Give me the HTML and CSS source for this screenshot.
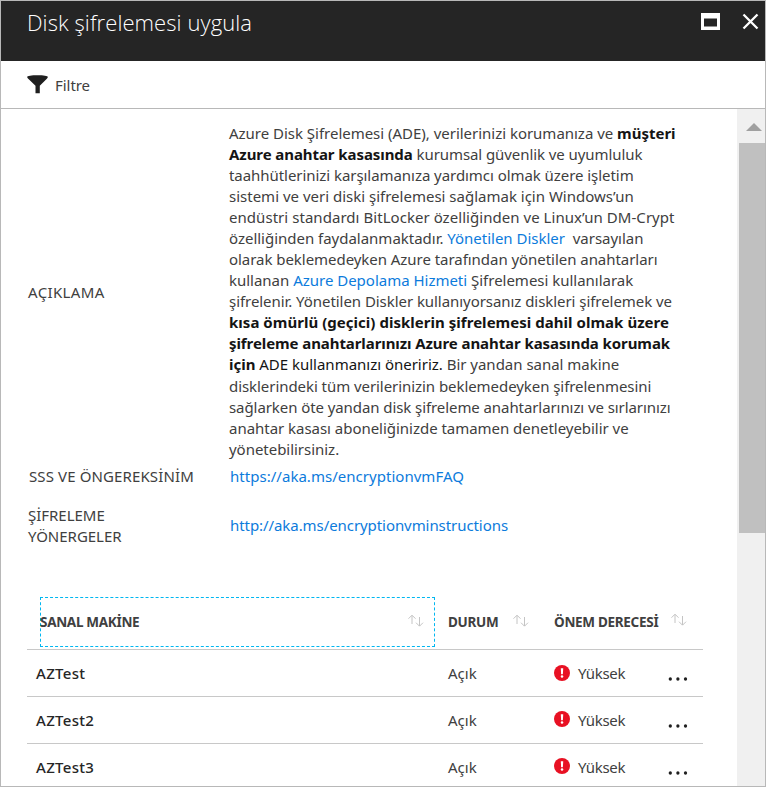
FILE: index.html
```html
<!DOCTYPE html>
<html lang="tr">
<head>
<meta charset="utf-8">
<title>Disk şifrelemesi uygula</title>
<link rel="stylesheet" href="styles.css">
</head>
<body>
<svg width="0" height="0" class="defs">
  <symbol id="sort" viewBox="0 0 16 13"><path d="M4 10V1.500M.5 4.700L4 1.200l3.500 3.500M11.500 3v9M8 8.700l3.500 3.500L15 8.700" fill="none" stroke="#c4c4c4" stroke-width="1"/></symbol>
  <symbol id="alert" viewBox="0 0 16 16"><circle cx="8" cy="8" r="8" fill="#e81123"/><path d="M6.800 3.200h2.400L8.900 9.200H7.100z" fill="#fff"/><circle cx="8" cy="11.600" r="1.250" fill="#fff"/></symbol>
  <symbol id="more" viewBox="0 0 20 4"><g fill="#1f1f1f"><circle cx="2.300" cy="2" r="1.650"/><circle cx="9.900" cy="2" r="1.650"/><circle cx="17.500" cy="2" r="1.650"/></g></symbol>
</svg>
<div class="blade">
  <header class="titlebar">
    <h1 class="title">Disk şifrelemesi uygula</h1>
    <svg class="maximize" width="19" height="17" viewBox="0 0 19 17"><path fill="#fff" fill-rule="evenodd" d="M0 0h19v17H0zM3 5.500v8h13v-8z"/></svg>
    <svg class="close" width="17" height="17" viewBox="0 0 17 17"><path d="M1.500 1.500l14 14M15.500 1.500l-14 14" stroke="#fff" stroke-width="2.300" fill="none"/></svg>
  </header>
  <div class="toolbar">
    <svg class="funnel" width="21" height="19" viewBox="0 0 21 19"><path fill="#1f1f1f" d="M.2 2C.2.900 4.500.3 10.500.3S20.800.900 20.800 2c0 .7-.6 1.200-1.200 1.900L12.800 10.800V18.200H8.500V10.800L1.500 3.900C.8 3.200.2 2.700.2 2z"/></svg>
    <span class="filter">Filtre</span>
  </div>
  <div class="body">
    <main class="content">
      <dl class="details">
        <dt class="about">AÇIKLAMA</dt>
        <dd class="desc">
          <span class="line">Azure Disk Şifrelemesi (ADE), verilerinizi korumanıza ve <b>müşteri</b></span>
          <span class="line"><b>Azure anahtar kasasında</b> kurumsal güvenlik ve uyumluluk</span>
          <span class="line">taahhütlerinizi karşılamanıza yardımcı olmak üzere işletim</span>
          <span class="line">sistemi ve veri diski şifrelemesi sağlamak için Windows’un</span>
          <span class="line">endüstri standardı BitLocker özelliğinden ve Linux’un DM-Crypt</span>
          <span class="line">özelliğinden faydalanmaktadır. <a>Yönetilen Diskler</a>&nbsp; varsayılan</span>
          <span class="line">olarak beklemedeyken Azure tarafından yönetilen anahtarları</span>
          <span class="line">kullanan <a>Azure Depolama Hizmeti</a> Şifrelemesi kullanılarak</span>
          <span class="line">şifrelenir. Yönetilen Diskler kullanıyorsanız diskleri şifrelemek ve</span>
          <span class="line"><b>kısa ömürlü (geçici) disklerin şifrelemesi dahil olmak üzere</b></span>
          <span class="line"><b>şifreleme anahtarlarınızı Azure anahtar kasasında korumak</b></span>
          <span class="line"><b>için</b> <span class="dark">ADE kullanmanızı öneririz.</span> Bir yandan sanal makine</span>
          <span class="line">disklerindeki tüm verilerinizin beklemedeyken şifrelenmesini</span>
          <span class="line">sağlarken öte yandan disk şifreleme anahtarlarınızı ve sırlarınızı</span>
          <span class="line">anahtar kasası aboneliğinizde tamamen denetleyebilir ve</span>
          <span class="line">yönetebilirsiniz.</span>
        </dd>
        <dt class="faq">SSS VE ÖNGEREKSİNİM</dt>
        <dd class="faq-link"><a>https://aka.ms/encryptionvmFAQ</a></dd>
        <dt class="steps">ŞİFRELEME<br>YÖNERGELER</dt>
        <dd class="steps-link"><a>http://aka.ms/encryptionvminstructions</a></dd>
      </dl>
      <div class="table">
        <div class="row head">
          <div class="vm-head"><span>SANAL MAKİNE</span><svg class="sort"><use href="#sort"/></svg></div>
          <div class="status-head">DURUM<svg class="sort"><use href="#sort"/></svg></div>
          <div class="severity-head">ÖNEM DERECESİ<svg class="sort"><use href="#sort"/></svg></div>
        </div>
        <div class="row"><div class="vm">AZTest</div><div>Açık</div><div class="severity"><svg class="alert first"><use href="#alert"/></svg><span>Yüksek</span></div><svg class="more"><use href="#more"/></svg></div>
        <div class="row"><div class="vm">AZTest2</div><div>Açık</div><div class="severity"><svg class="alert"><use href="#alert"/></svg><span>Yüksek</span></div><svg class="more"><use href="#more"/></svg></div>
        <div class="row"><div class="vm">AZTest3</div><div>Açık</div><div class="severity"><svg class="alert"><use href="#alert"/></svg><span>Yüksek</span></div><svg class="more"><use href="#more"/></svg></div>
      </div>
    </main>
    <div class="scrollbar">
      <svg width="16" height="8" viewBox="0 0 16 8"><path d="M0 8L8 0l8 8z" fill="#a0a0a0"/></svg>
      <div class="thumb"></div>
    </div>
  </div>
</div>
</body>
</html>
```
FILE: styles.css
```css
* { box-sizing: border-box; }
body { margin: 0; font: 15px/21px "Noto Sans", sans-serif; color: #404040; background: #fff; overflow: hidden; }
svg { display: block; flex: none; }
.defs { display: none; }
a { color: #0c7bdc; }
b { color: #141414; font-weight: 700; }

.blade { width: 766px; height: 787px; border: 1px solid #b8b8b8; overflow: hidden; display: flex; flex-direction: column; }

.titlebar { flex: none; height: 60px; background: #252525; color: #fff; display: flex; align-items: flex-start; padding: 0 6px 0 26px; }
.title { margin: 0; flex: 1; font: 300 22px/42px "Open Sans", sans-serif; letter-spacing: .08px; white-space: nowrap; }
.maximize { margin: 12px 22px 0 0; }
.close { margin-top: 12px; }

.toolbar { flex: none; height: 48px; border-bottom: 1px solid #b8b8b8; display: flex; padding-left: 26px; }
.funnel { margin: 14px 7px 0 0; }
.filter { margin-top: 14px; letter-spacing: -.05px; }

.body { flex: 1; min-height: 0; display: flex; }
.content { width: 736px; flex: none; padding: 14px 34px 0 26px; overflow: hidden; }

.details { margin: 0; display: grid; grid-template-columns: 202px 1fr; grid-template-rows: 337px 33px 65px; align-items: center; }
.details dt { padding-left: 1px; letter-spacing: .35px; white-space: nowrap; }
.details .about { padding-top: 2px; }
.details dd { margin: 0; }
.details .faq { letter-spacing: .12px; padding-left: 2px; }
.faq-link { padding-left: 1px; letter-spacing: .03px; }
.details .steps { letter-spacing: -.02px; }
.details .steps-link { padding-left: 1px; letter-spacing: -.07px; }
.line { display: block; height: 21px; white-space: nowrap; letter-spacing: -.02px; }
.line:nth-child(2) { letter-spacing: -.075px; }
.line:nth-child(3) { letter-spacing: -.055px; }
.line:nth-child(4) { letter-spacing: 0; }
.line:nth-child(5) { letter-spacing: .045px; }
.line:nth-child(6) { letter-spacing: -.015px; }
.line:nth-child(7) { letter-spacing: -.045px; }
.line:nth-child(8) { letter-spacing: -.015px; }
.line:nth-child(9) { letter-spacing: -.055px; }
.line:nth-child(10) { letter-spacing: .032px; }
.line:nth-child(11) { letter-spacing: -.083px; }
.line:nth-child(12) { letter-spacing: -.015px; height: 22px; }
.line:nth-child(13) { letter-spacing: -.06px; }
.line:nth-child(14) { letter-spacing: -.08px; }
.line:nth-child(15) { letter-spacing: -.03px; }
.line:nth-child(16) { letter-spacing: -.03px; }
.dark { color: #141414; }

.table { margin-top: 39px; }
.row { display: grid; grid-template-columns: 421px 106px 114px 1fr; height: 47px; align-items: center; border-bottom: 1px solid #c8c8c8; }
.vm { padding-left: 9px; font-weight: 500; letter-spacing: .3px; color: #262626; }
.severity { display: flex; align-items: center; letter-spacing: -.3px; }
.alert { width: 16px; height: 16px; margin: -3px 8px 0 0; }
.alert.first { margin-top: -1px; }
.more { width: 20px; height: 4px; margin-top: 12px; }

.head { height: 53px; align-items: start; font-weight: 700; font-size: 13.5px; letter-spacing: -.3px; }
.head > div { display: flex; height: 50px; align-items: center; white-space: nowrap; }
.head .vm-head { width: 395px; margin-left: 13px; border: 1px dashed #00b7f1; justify-content: space-between; padding-right: 10px; }
.vm-head span { margin-left: -1px; }
.sort { width: 16px; height: 13px; margin-top: -4px; }
.status-head .sort { margin-left: 15px; }
.severity-head .sort { margin: -6px 0 0 13px; }

.scrollbar { flex: 1; background: #f0f0f0; padding: 14px 0 0 2px; }
.scrollbar svg { margin-left: 7px; }
.thumb { margin-top: 12px; height: 390px; background: #c0c0c0; }
```
